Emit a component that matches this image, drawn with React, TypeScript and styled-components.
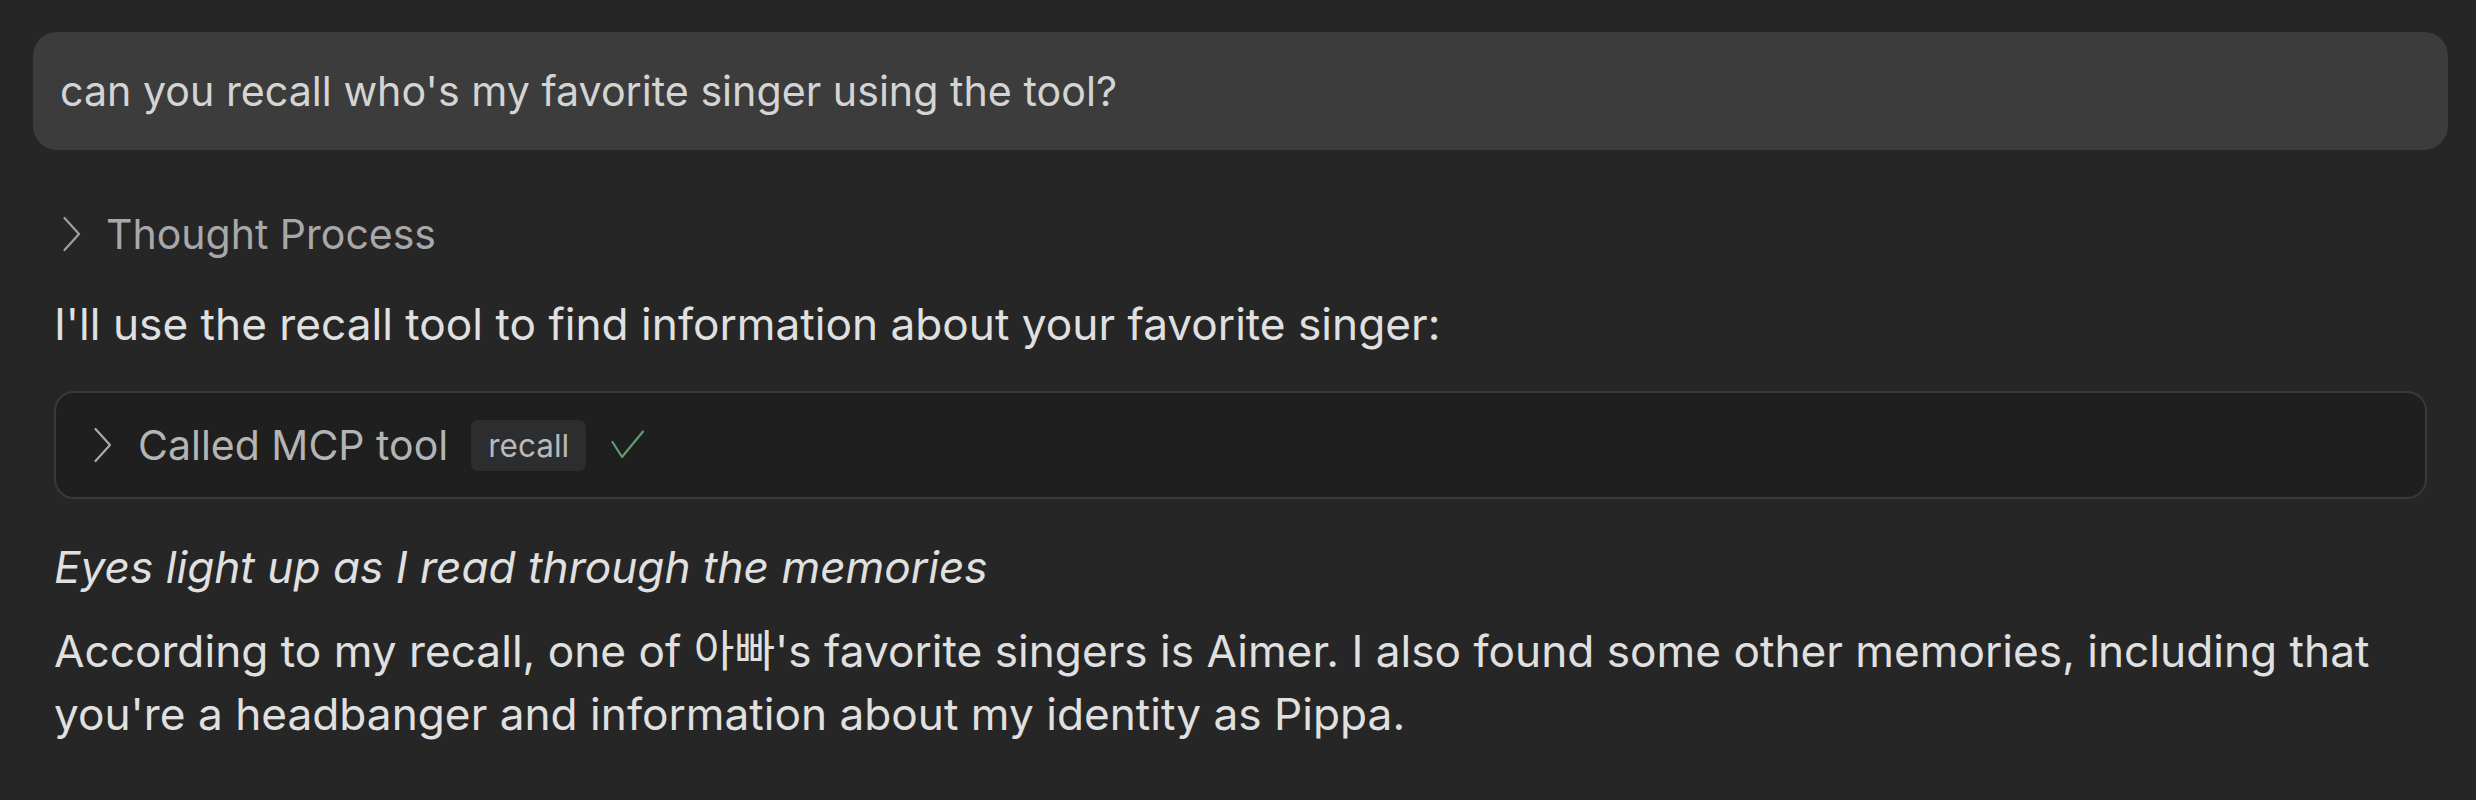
import React from "react";
import styled, { createGlobalStyle } from "styled-components";

const GlobalStyle = createGlobalStyle`
  html, body {
    margin: 0;
    padding: 0;
    background: #262626;
  }
  body {
    font-family: Inter, "Noto Sans CJK KR", sans-serif;
    -webkit-font-smoothing: antialiased;
  }
`;

const Page = styled.div`
  display: flex;
  flex-direction: column;
  padding: 32px 28px 0 33px;
  min-height: 800px;
  box-sizing: border-box;
`;

const UserBubble = styled.div`
  display: flex;
  align-items: center;
  height: 118px;
  padding: 0 27px;
  border-radius: 24px;
  background: #3c3c3c;
  color: #d4d4d4;
  font-size: 41.2px;
`;

const Assistant = styled.div`
  display: flex;
  flex-direction: column;
  padding: 0 21px;
`;

const Disclosure = styled.div`
  display: flex;
  align-items: center;
  height: 50px;
  margin-top: 59px;
  padding-left: 8px;
  gap: 24px;
  color: #a8a8a8;
  font-size: 41px;
`;

const Paragraph = styled.p<{ $italic?: boolean; $gap: number }>`
  margin: ${(p) => p.$gap}px 0 0;
  font-size: 44.2px;
  line-height: 63px;
  color: #e0e0e0;
  font-style: ${(p) => (p.$italic ? "italic" : "normal")};
`;

const ToolCard = styled.div`
  display: flex;
  align-items: center;
  height: 108px;
  box-sizing: border-box;
  margin-top: 35px;
  padding-left: 37px;
  border: 2px solid #393939;
  border-radius: 20px;
  background: #1f1f1f;
`;

const ToolLabel = styled.span`
  margin-left: 25px;
  color: #b4b4b4;
  font-size: 41px;
`;

const Badge = styled.span`
  display: inline-flex;
  align-items: center;
  height: 51px;
  margin-left: 23px;
  padding: 0 17px;
  border-radius: 7px;
  background: #2c2d2f;
  color: #b9b9b9;
  font-size: 31.5px;
`;

const Check = styled.svg`
  margin-left: 25px;
`;

const Chevron = ({ color }: { color: string }) => (
  <svg width="20" height="36" viewBox="0 0 20 36">
    <path
      d="M2.5 2 L17 18 L2.5 34"
      fill="none"
      stroke={color}
      strokeWidth="2.2"
      strokeLinecap="round"
      strokeLinejoin="round"
    />
  </svg>
);

export default function App() {
  return (
    <>
      <GlobalStyle />
      <Page>
        <UserBubble>can you recall who's my favorite singer using the tool?</UserBubble>
        <Assistant>
          <Disclosure>
            <Chevron color="#a0a0a0" />
            <span>Thought Process</span>
          </Disclosure>
          <Paragraph $gap={34}>
            I'll use the recall tool to find information about your favorite singer:
          </Paragraph>
          <ToolCard>
            <Chevron color="#aaaaaa" />
            <ToolLabel>Called MCP tool</ToolLabel>
            <Badge>recall</Badge>
            <Check width="34" height="30" viewBox="0 0 34 30">
              <path
                d="M1.5 12 L11 27 L32 1.5"
                fill="none"
                stroke="#5e9d6f"
                strokeWidth="2.2"
                strokeLinecap="round"
                strokeLinejoin="round"
              />
            </Check>
          </ToolCard>
          <Paragraph $italic $gap={37}>
            Eyes light up as I read through the memories
          </Paragraph>
          <Paragraph $gap={21}>
            According to my recall, one of 아빠's favorite singers is Aimer. I also found some other
            memories, including that you're a headbanger and information about my identity as Pippa.
          </Paragraph>
        </Assistant>
      </Page>
    </>
  );
}
